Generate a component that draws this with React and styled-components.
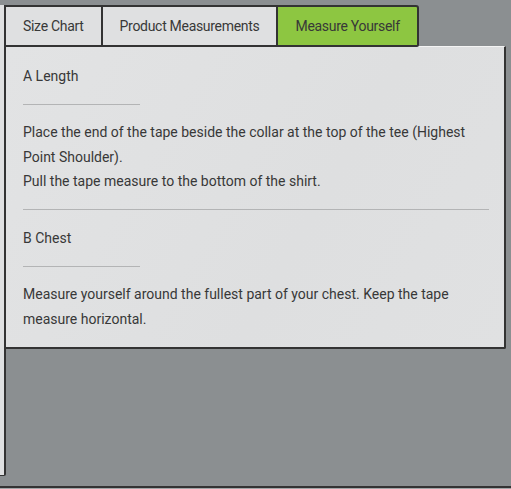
import React, { useState } from "react";
import styled, { createGlobalStyle } from "styled-components";

const GlobalStyle = createGlobalStyle`
  html, body {
    margin: 0;
    padding: 0;
    background: #8b8f91;
  }
  body {
    font-family: Roboto, "DejaVu Sans Condensed", sans-serif;
    color: #383838;
  }
`;

const tabs = ["Size Chart", "Product Measurements", "Measure Yourself"];

const sections = [
  {
    title: "A Length",
    lines: [
      "Place the end of the tape beside the collar at the top of the tee (Highest Point Shoulder).",
      "Pull the tape measure to the bottom of the shirt.",
    ],
  },
  {
    title: "B Chest",
    lines: [
      "Measure yourself around the fullest part of your chest. Keep the tape measure horizontal.",
    ],
  },
];

function App() {
  const [active, setActive] = useState(2);
  return (
    <>
      <GlobalStyle />
      <Screen>
        <Stage>
          <Stub />
          <Main>
            <TabRow>
              {tabs.map((t, i) => (
                <Tab key={t} $active={i === active} onClick={() => setActive(i)}>
                  {t}
                </Tab>
              ))}
            </TabRow>
            <Panel>
              {sections.map((s, i) => (
                <React.Fragment key={s.title}>
                  {i > 0 && <Divider />}
                  <Section>
                    <Title>{s.title}</Title>
                    <ShortRule />
                    <Text>
                      {s.lines.map((l) => (
                        <Line key={l}>{l}</Line>
                      ))}
                    </Text>
                  </Section>
                </React.Fragment>
              ))}
            </Panel>
          </Main>
        </Stage>
        <Footer />
      </Screen>
    </>
  );
}

export default App;

const Screen = styled.div`
  width: 511px;
  height: 489px;
  display: flex;
  flex-direction: column;
  overflow: hidden;
`;

const Stage = styled.div`
  height: 486px;
  display: flex;
  align-items: flex-start;
`;

const Stub = styled.div`
  margin-top: 5px;
  width: 4px;
  height: 470px;
  background: #dfe0e1;
  border-right: 2px solid #333;
  border-bottom: 1px solid #333;
  border-bottom-right-radius: 2px;
  flex-shrink: 0;
`;

const Main = styled.div`
  margin-left: -2px;
  margin-top: 5px;
  width: 502px;
  display: flex;
  flex-direction: column;
`;

const TabRow = styled.div`
  display: flex;
  position: relative;
  z-index: 1;
  margin-bottom: -1px;
`;

const Tab = styled.div`
  height: 38px;
  padding: 0 17px;
  display: flex;
  align-items: center;
  font-size: 14px;
  letter-spacing: -0.3px;
  color: #383838;
  background: ${(p) => (p.$active ? "#8dc641" : "#dfe0e1")};
  border: 2px solid #333;
  margin-right: -2px;
  cursor: pointer;
  &:last-child {
    border-top-right-radius: 3px;
    border-bottom-right-radius: 2px;
  }
`;

const Panel = styled.div`
  background: linear-gradient(120deg, #e2e3e4 0%, #dedfe0 60%, #e0e1e2 100%);
  border: 2px solid #333;
  border-top: 1px solid #f4f4f4;
  border-bottom-right-radius: 2px;
  padding: 17px 15px 16px 17px;
`;

const Section = styled.div`
  display: flex;
  flex-direction: column;
`;

const Title = styled.div`
  font-size: 14px;
  line-height: 24px;
`;

const ShortRule = styled.div`
  width: 117px;
  height: 1px;
  background: #b3b4b5;
  margin: 16px 0 15px;
`;

const Text = styled.div`
  font-size: 14px;
  line-height: 24.5px;
`;

const Line = styled.p`
  margin: 0;
`;

const Divider = styled.div`
  height: 1px;
  background: #b3b4b5;
  margin: 15.5px 0 16px;
`;

const Footer = styled.div`
  flex: 1;
  border-top: 2px solid #333;
  background: #a3a6a8;
`;
